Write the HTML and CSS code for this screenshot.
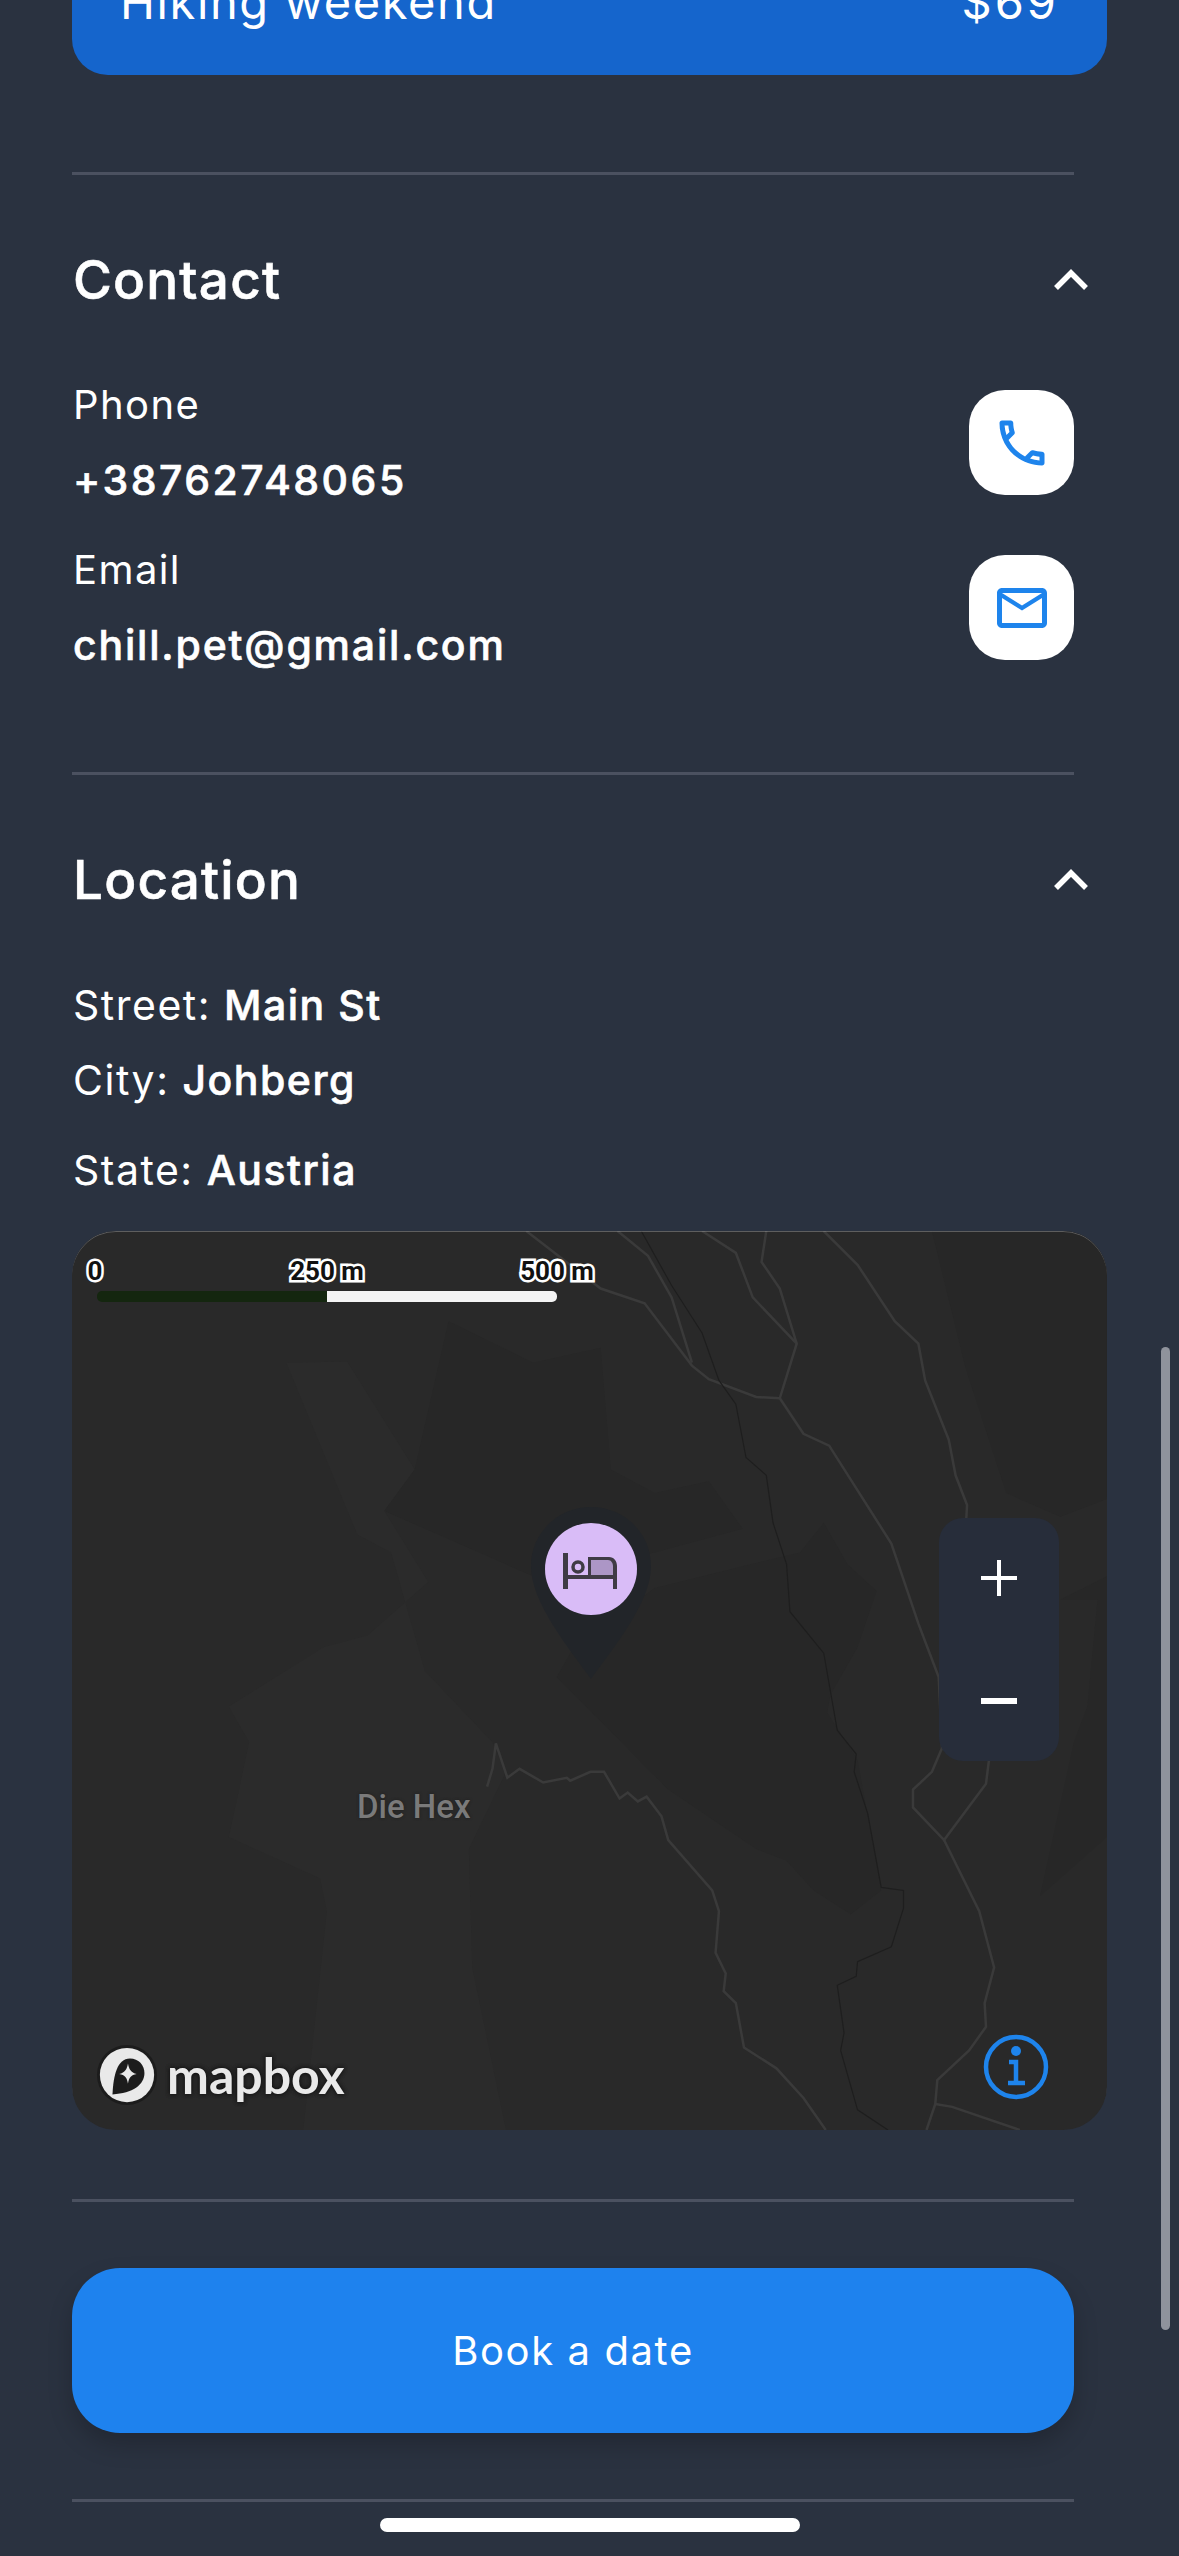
FILE: index.html
```html
<!DOCTYPE html>
<html lang="en">
<head>
  <meta charset="UTF-8" />
  <meta name="viewport" content="width=device-width, initial-scale=1.0"/>
  <title>Hiking weekend – Details</title>
  <link rel="stylesheet" href="styles.css">
</head>
<body>

  <main class="page">
    <div class="price-card">
      <span>Hiking weekend</span>
      <span class="price">$69</span>
    </div>

    <hr class="divider divider-first">

    <section class="section">
      <div class="section-head">
        <h2>Contact</h2>
        <svg class="chevron" viewBox="0 0 36 22"><path d="M3 19 18 4l15 15"/></svg>
      </div>

      <div class="contact-row">
        <div class="contact-text">
          <div class="label">Phone</div>
          <div class="value value-phone">+38762748065</div>
        </div>
        <button class="contact-btn" aria-label="Call">
          <svg viewBox="0 0 24 24"><path d="M6.54 5c.06.89.21 1.76.45 2.59l-1.2 1.2c-.41-1.2-.67-2.47-.76-3.79h1.51m9.86 12.02c.85.24 1.72.39 2.6.45v1.49c-1.32-.09-2.59-.35-3.8-.75l1.2-1.19M7.5 3H4c-.55 0-1 .45-1 1 0 9.39 7.61 17 17 17 .55 0 1-.45 1-1v-3.49c0-.55-.45-1-1-1-1.24 0-2.45-.2-3.57-.57-.1-.04-.21-.05-.31-.05-.26 0-.51.1-.71.29l-2.2 2.2c-2.83-1.45-5.15-3.76-6.59-6.59l2.2-2.2c.28-.28.36-.67.25-1.02C8.7 6.45 8.5 5.25 8.5 4c0-.55-.45-1-1-1z"/></svg>
        </button>
      </div>

      <div class="contact-row">
        <div class="contact-text">
          <div class="label">Email</div>
          <div class="value">chill.pet@gmail.com</div>
        </div>
        <button class="contact-btn" aria-label="Email">
          <svg viewBox="0 0 24 24"><path d="M22 6c0-1.1-.9-2-2-2H4c-1.1 0-2 .9-2 2v12c0 1.1.9 2 2 2h16c1.1 0 2-.9 2-2V6zm-2 0l-8 5-8-5h16zm0 12H4V8l8 5 8-5v10z"/></svg>
        </button>
      </div>
    </section>

    <hr class="divider divider-location">

    <section class="section">
      <div class="section-head">
        <h2>Location</h2>
        <svg class="chevron" viewBox="0 0 36 22"><path d="M3 19 18 4l15 15"/></svg>
      </div>

      <p class="address address-street">Street: <b>Main St</b></p>
      <p class="address address-city">City: <b>Johberg</b></p>
      <p class="address address-state">State: <b>Austria</b></p>

      <div class="map">
        <svg class="map-base" viewBox="18 18 1531 1516" preserveAspectRatio="none">
          <!-- terrain -->
          <path class="land-light" d="M335 240 425 238 525 420 480 490 545 610 455 700 390 720 250 820 280 880 250 1040 385 1110 395 1165 360 1534 660 1534 610 1260 605 1060 660 930 640 880 540 760 490 560 440 530 335 240z"/>
          <path class="land-dark" d="M1095 560 1130 510 1165 580 1208 625 1180 720 1140 800 1135 830 1180 910 1215 1130 1170 1170 1115 1130 1075 1080 1030 1060 900 960 735 770 760 720 880 620 1040 575 1095 560z"/>
          <path class="land-dark" d="M1290 18 1549 18 1549 470 1480 500 1400 460 1340 250 1290 18z"/>
          <path class="land-dark" d="M1480 640 1535 640 1520 820 1500 880 1450 1140 1549 1040 1549 600z"/>
          <path class="land-dark" d="M575 170 700 240 800 215 815 420 880 460 960 440 1010 520 880 560 700 600 480 490 525 420 575 170z"/>
          <!-- trails -->
          <path class="road" d="M690 18 800 115 865 140 935 245 960 268 1030 298 1065 300"/>
          <path class="road" d="M825 18 870 60 905 130 935 240"/>
          <path class="road" d="M950 18 1000 55 1025 130 1090 208"/>
          <path class="road" d="M1045 18 1038 70 1065 115 1090 208 1065 300 1100 360 1138 380 1230 545 1270 680 1300 770 1305 890 1290 930 1262 960 1262 990 1308 1045 1370 950 1375 905"/>
          <path class="road" d="M1130 18 1180 75 1235 170 1270 208 1280 270 1315 370 1325 430 1342 480 1340 520"/>
          <path class="road" d="M1308 1045 1360 1165 1382 1260 1368 1320 1370 1360 1345 1400 1298 1450 1295 1490 1282 1534M1295 1490 1320 1495 1420 1534"/>
          <path class="road" d="M632 955 640 925 645 882 662 940 680 925 715 948 750 940 755 945 785 930 805 930 828 975 840 965 855 980 868 972 890 1005 900 1045 965 1130 975 1165 970 1235 985 1270 982 1300 1000 1320 1012 1395 1060 1430 1100 1480 1133 1534"/>
          <path class="road-dark" d="M860 18 905 110 950 190 975 270 1000 310 1015 400 1045 430 1055 510 1075 580 1080 660 1130 730 1150 860 1178 900 1175 930 1195 1000 1215 1125 1248 1130 1248 1160 1230 1225 1180 1250 1178 1275 1150 1290 1160 1370 1155 1400 1180 1500 1225 1534"/>
        </svg>

        <span class="scale-label scale-0">0</span>
        <span class="scale-label scale-250">250 m</span>
        <span class="scale-label scale-500">500 m</span>
        <div class="scale-bar"><i></i><i></i></div>

        <span class="place-label">Die Hex</span>

        <svg class="pin" viewBox="0 0 120 172">
          <path class="pin-shape" d="M60 0C27 0 0 26 0 59c0 37 38 82 60 113 22-31 60-76 60-113C120 26 93 0 60 0z"/>
          <circle class="pin-dot" cx="60" cy="62" r="46"/>
          <path class="bed-fill" d="M60 53h18c4 0 5 3 5 7v8H60z"/>
          <path class="bed-line" d="M32 46h5v22h20V50h21c5 0 8 4 8 9v23h-4V72H37v10h-5zM60 53v15h22v-9c0-3-2-6-5-6z"/>
          <circle class="bed-ring" cx="47" cy="60" r="5"/>
        </svg>

        <div class="zoom-ctrl">
          <svg viewBox="0 0 36 36"><path d="M16 0h4v16h16v4H20v16h-4V20H0v-4h16z"/></svg>
          <svg viewBox="0 0 36 36"><path d="M0 15h36v6H0z"/></svg>
        </div>

        <div class="mapbox">
          <svg class="mapbox-mark" viewBox="0 0 64 64">
            <circle class="mark-edge" cx="32" cy="32" r="31"/>
            <circle class="mark-disc" cx="32" cy="32" r="28"/>
            <path class="mark-drop" d="M35 15c9 0 15 7 15 15 0 12-12 21-33 22 1-20 5-37 18-37z"/>
            <path class="mark-star" d="M33 20c1 6 3 9 9 11-6 1-8 4-9 10-1-6-3-9-9-10 6-2 8-5 9-11z"/>
          </svg>
          <span>mapbox</span>
        </div>

        <svg class="info" viewBox="0 0 66 66">
          <circle cx="33" cy="33" r="30"/>
          <circle class="info-dot" cx="33" cy="17" r="5"/>
          <path d="M26 28h7v21M25 49h17"/>
        </svg>
      </div>
    </section>

    <hr class="divider divider-book">

    <button class="book-btn">Book a date</button>

    <hr class="divider divider-last">
  </main>

  <div class="scrollbar"></div>
  <div class="home-bar"></div>

</body>
</html>
```

FILE: styles.css
```css
* {
  box-sizing: border-box;
}

html, body {
  margin: 0;
  height: 2556px;
  overflow: hidden;
}

body {
  font-family: Inter, 'Noto Sans', sans-serif;
  background: #2a3240;
  color: #fff;
  position: relative;
}

.page {
  width: 1074px;
  padding-left: 72px;
}

.price-card {
  width: 1035px;
  height: 135px;
  margin-top: -60px;
  padding: 0 48px;
  background: #1565cc;
  border-radius: 0 0 36px 36px;
  display: flex;
  justify-content: space-between;
  font-size: 47px;
  line-height: 124px;
  letter-spacing: 1.6px;
}

.price {
  letter-spacing: 3px;
}

.divider {
  height: 3px;
  margin: 0;
  border: none;
  background: #4b5160;
}

.divider-first {
  margin-top: 97px;
}

.divider-location {
  margin-top: 112px;
}

.divider-book {
  margin-top: 69px;
}

.divider-last {
  margin-top: 66px;
}

.section-head {
  height: 60px;
  margin-top: 75px;
  display: flex;
  align-items: center;
  justify-content: space-between;
}

h2 {
  margin: 0 0 0 1px;
  font-size: 53px;
  font-weight: 500;
  letter-spacing: 1.2px;
  -webkit-text-stroke: 0.6px #fff;
}

.chevron {
  width: 36px;
  height: 22px;
  margin-right: -15px;
  fill: none;
  stroke: #fff;
  stroke-width: 5.5;
}

.contact-row {
  display: flex;
  align-items: center;
  justify-content: space-between;
  height: 105px;
  margin-top: 80px;
}

.contact-row + .contact-row {
  margin-top: 60px;
}

.contact-text {
  margin-left: 1px;
}

.label {
  font-size: 40px;
  line-height: 48px;
  letter-spacing: 1.4px;
}

.value {
  margin-top: 27px;
  font-size: 41px;
  font-weight: 500;
  line-height: 48px;
  letter-spacing: 1.8px;
  -webkit-text-stroke: 0.6px #fff;
}

.value-phone {
  letter-spacing: 2.5px;
}

.contact-btn {
  width: 105px;
  height: 105px;
  padding: 0;
  border: none;
  border-radius: 36px;
  background: #fff;
  display: flex;
  align-items: center;
  justify-content: center;
}

.contact-btn svg {
  width: 60px;
  height: 60px;
  fill: #1e84ec;
}

.address {
  margin: 0 0 0 1px;
  font-size: 41px;
  line-height: 48px;
  letter-spacing: 1.5px;
}

.address b {
  font-weight: 500;
  -webkit-text-stroke: 0.6px #fff;
}

.address-street {
  margin-top: 71px;
}

.address-city {
  margin-top: 27px;
}

.address-state {
  margin-top: 42px;
}

.map {
  position: relative;
  width: 1035px;
  height: 899px;
  margin-top: 37px;
  background: #292929;
  border-radius: 44px;
  overflow: hidden;
}

/* hairline along the top edge of the map */
.map::after {
  content: "";
  position: absolute;
  inset: 0;
  border-radius: inherit;
  box-shadow: inset 0 1px 0 rgba(255, 255, 255, 0.25);
}

.map-base {
  display: block;
  width: 100%;
  height: 100%;
}

.land-light {
  fill: #2b2b2b;
}

.land-dark {
  fill: #272727;
}

.road {
  fill: none;
  stroke: #3a3a3a;
  stroke-width: 2.5px;
  vector-effect: non-scaling-stroke;
}

.road-dark {
  fill: none;
  stroke: #1e1e1e;
  stroke-width: 1.2px;
  vector-effect: non-scaling-stroke;
}

.scale-label {
  position: absolute;
  top: 25px;
  font-family: Roboto, sans-serif;
  font-size: 26px;
  font-weight: 700;
  line-height: 30px;
  color: #111;
  -webkit-text-stroke: 5px #fff;
  paint-order: stroke fill;
  transform: translateX(-50%);
}

.scale-0 {
  left: 23px;
}

.scale-250 {
  left: 255px;
}

.scale-500 {
  left: 485px;
}

.scale-bar {
  position: absolute;
  left: 25px;
  top: 60px;
  width: 460px;
  height: 11px;
  display: flex;
  border-radius: 5px;
  overflow: hidden;
}

.scale-bar i {
  flex: 1;
  background: #14260f;
}

.scale-bar i + i {
  background: #f4f4f4;
}

.place-label {
  position: absolute;
  left: 285px;
  top: 557px;
  font-family: Roboto, sans-serif;
  font-size: 33px;
  font-weight: 500;
  line-height: 38px;
  color: #7a7a7a;
  text-shadow: 0 0 3px #1d1d1d;
}

.pin {
  position: absolute;
  left: 459px;
  top: 276px;
  width: 120px;
  height: 172px;
}

.pin-shape {
  fill: #222529;
}

.pin-dot {
  fill: #d9bcf7;
}

.bed-fill {
  fill: #ac96c6;
}

.bed-line {
  fill: #3f3b45;
  fill-rule: evenodd;
}

.bed-ring {
  fill: none;
  stroke: #3f3b45;
  stroke-width: 3.5;
}

.zoom-ctrl {
  position: absolute;
  left: 867px;
  top: 287px;
  width: 120px;
  height: 243px;
  padding: 42px 0;
  background: #272d3a;
  border-radius: 24px;
  display: flex;
  flex-direction: column;
  align-items: center;
  justify-content: space-between;
}

.zoom-ctrl svg {
  width: 36px;
  height: 36px;
  fill: #fff;
}

.mapbox {
  position: absolute;
  left: 24px;
  bottom: 24px;
  display: flex;
  align-items: center;
  gap: 9px;
}

.mapbox span {
  font-family: Lato, sans-serif;
  font-size: 50px;
  font-weight: 700;
  line-height: 60px;
  color: #e9e9e9;
  text-shadow: 0 0 4px #151515, 0 0 4px #151515;
}

.mapbox-mark {
  width: 62px;
  height: 62px;
}

.mark-edge,
.mark-drop {
  fill: #1c1c1c;
}

.mark-disc,
.mark-star {
  fill: #e9e9e9;
}

.info {
  position: absolute;
  left: 911px;
  top: 803px;
  width: 66px;
  height: 66px;
  fill: none;
  stroke: #1e84ec;
  stroke-width: 4.5;
}

.info-dot {
  fill: #1e84ec;
  stroke: none;
}

.book-btn {
  display: block;
  width: 100%;
  height: 165px;
  margin-top: 66px;
  border: none;
  border-radius: 48px;
  background: #1e82ee;
  color: #fff;
  font-family: inherit;
  font-size: 40px;
  letter-spacing: 1.6px;
  box-shadow: 0 12px 24px rgba(0, 0, 0, 0.2);
}

.scrollbar {
  position: absolute;
  left: 1161px;
  top: 1347px;
  width: 9px;
  height: 983px;
  border-radius: 5px;
  background: #8f939c;
}

.home-bar {
  position: absolute;
  left: 380px;
  top: 2518px;
  width: 420px;
  height: 14px;
  border-radius: 7px;
  background: #fff;
}
```
